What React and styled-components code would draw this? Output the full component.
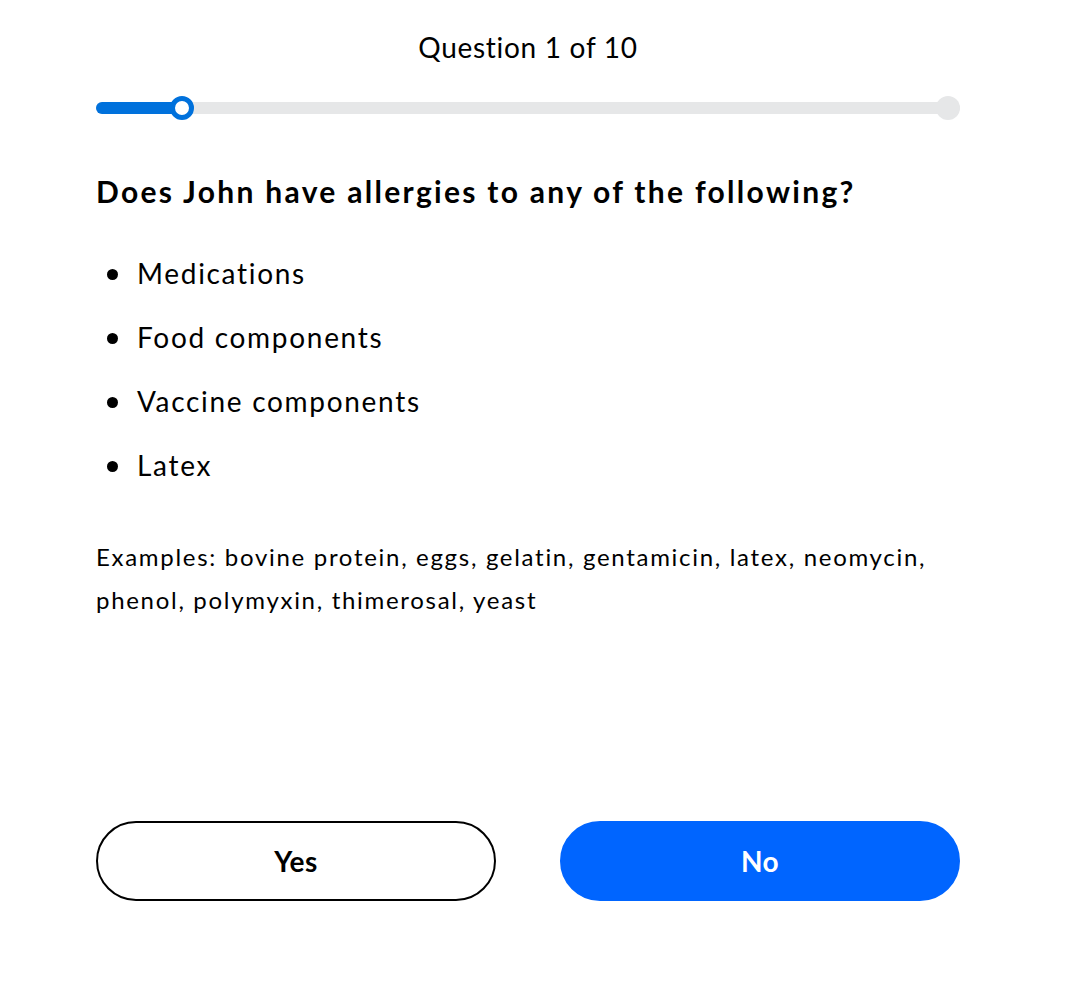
import React from "react";
import styled, { createGlobalStyle } from "styled-components";

const GlobalStyle = createGlobalStyle`
  body {
    margin: 0;
    background: #fff;
    font-family: Lato, "Noto Sans", sans-serif;
    color: #000;
  }
`;

const allergies = ["Medications", "Food components", "Vaccine components", "Latex"];

const App = () => {
  const current = 1;
  const total = 10;
  const pct = 10;

  return (
    <>
      <GlobalStyle />
      <Page>
        <Counter>
          Question {current} of {total}
        </Counter>
        <Progress>
          <Track />
          <Fill style={{ width: `${pct}%` }} />
          <Knob style={{ left: `${pct}%` }} />
          <EndDot />
        </Progress>
        <Heading>Does John have allergies to any of the following?</Heading>
        <List>
          {allergies.map((item) => (
            <Item key={item}>{item}</Item>
          ))}
        </List>
        <Examples>
          Examples: bovine protein, eggs, gelatin, gentamicin, latex, neomycin,
          phenol, polymyxin, thimerosal, yeast
        </Examples>
        <Actions>
          <AnswerBtn>Yes</AnswerBtn>
          <AnswerBtn primary>No</AnswerBtn>
        </Actions>
      </Page>
    </>
  );
};

export default App;

const Page = styled.main`
  width: 864px;
  padding: 27px 110px 0 96px;
`;

const Counter = styled.div`
  text-align: center;
  font-size: 28px;
  line-height: 40px;
  font-weight: 400;
  letter-spacing: 0.7px;
`;

const Progress = styled.div`
  position: relative;
  height: 24px;
  margin-top: 29px;
`;

const Track = styled.div`
  position: absolute;
  left: 0;
  right: 0;
  top: 6px;
  height: 12px;
  border-radius: 6px;
  background: #e6e7e8;
`;

const Fill = styled.div`
  position: absolute;
  left: 0;
  top: 6px;
  height: 12px;
  border-radius: 6px;
  background: #0071dc;
`;

const Knob = styled.div`
  position: absolute;
  top: 0;
  width: 24px;
  height: 24px;
  margin-left: -12px;
  border-radius: 50%;
  box-sizing: border-box;
  border: 5px solid #0071dc;
  background: #fff;
`;

const EndDot = styled.div`
  position: absolute;
  right: 0;
  top: 0;
  width: 24px;
  height: 24px;
  border-radius: 50%;
  background: #e6e7e8;
`;

const Heading = styled.h1`
  margin: 51px 0 0;
  font-size: 30px;
  line-height: 40px;
  font-weight: 700;
  letter-spacing: 2.3px;
`;

const List = styled.ul`
  list-style: none;
  margin: 30px 0 0;
  padding: 0;
`;

const Item = styled.li`
  display: flex;
  align-items: center;
  font-size: 28px;
  line-height: 64px;
  padding-left: 41px;
  letter-spacing: 1.7px;
  position: relative;

  &::before {
    content: "";
    position: absolute;
    left: 11px;
    top: 28px;
    width: 11px;
    height: 11px;
    border-radius: 50%;
    background: #000;
  }
`;

const Examples = styled.p`
  margin: 38px 0 0;
  font-size: 24px;
  line-height: 43px;
  letter-spacing: 1.7px;
`;

const Actions = styled.div`
  display: grid;
  grid-template-columns: 1fr 1fr;
  column-gap: 64px;
  margin-top: 200px;
`;

const AnswerBtn = styled.button`
  height: 80px;
  border-radius: 40px;
  box-sizing: border-box;
  border: 2px solid ${(p) => (p.primary ? "#0065ff" : "#000")};
  background: ${(p) => (p.primary ? "#0065ff" : "#fff")};
  color: ${(p) => (p.primary ? "#fff" : "#000")};
  font-family: inherit;
  font-size: 28px;
  font-weight: 700;
  letter-spacing: 0.5px;
  cursor: pointer;
`;
